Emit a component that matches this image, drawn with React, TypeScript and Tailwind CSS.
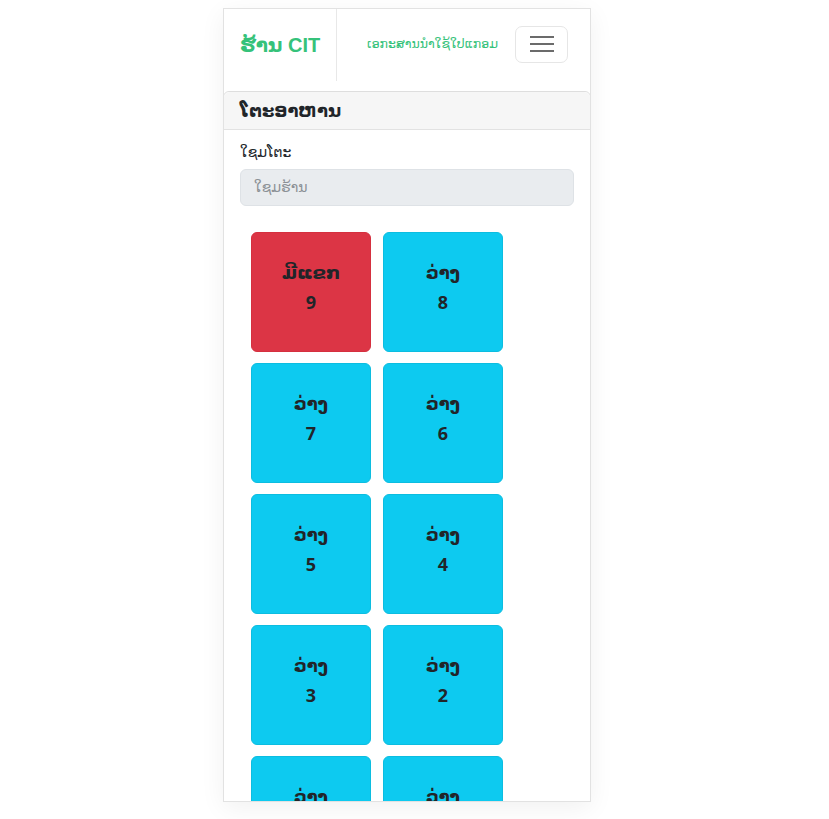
import React from "react";

const tables = [
  { label: "ມີແຂກ", n: 9, busy: true },
  { label: "ວ່າງ", n: 8 },
  { label: "ວ່າງ", n: 7 },
  { label: "ວ່າງ", n: 6 },
  { label: "ວ່າງ", n: 5 },
  { label: "ວ່າງ", n: 4 },
  { label: "ວ່າງ", n: 3 },
  { label: "ວ່າງ", n: 2 },
  { label: "ວ່າງ", n: 1 },
  { label: "ວ່າງ", n: 0 },
];

export default function App() {
  return (
    <div className="w-[829px] h-[819px] bg-white overflow-hidden pl-[223px] pt-[8px]">
      <div
        className="w-[368px] h-[794px] border border-[#e2e2e2] bg-white overflow-hidden flex flex-col shadow-[0_6px_24px_rgba(0,0,0,0.06)]"
        style={{ fontFamily: '"Noto Sans", "DejaVu Sans", sans-serif' }}
      >
        {/* navbar */}
        <div className="h-[82px] flex items-start shrink-0">
          <div className="w-[113px] h-[72px] border-r border-[#e8e8e8] flex items-center pl-[16px]">
            <span
              className="text-[20px] font-bold text-[#35c27a] leading-none"
              style={{ fontFamily: '"Liberation Sans", "DejaVu Sans", sans-serif' }}
            >
              ຮ້ານ CIT
            </span>
          </div>
          <div className="flex-1 h-[70px] flex items-center pl-[30px] pr-[22px] justify-between">
            <span className="text-[12.5px] text-[#35c27a] leading-none" style={{ fontFamily: '"DejaVu Sans", sans-serif' }}>
              ເອກະສານນຳໃຊ້ໃປແກອມ
            </span>
            <button className="w-[53px] h-[37px] border border-[#e6e6e6] rounded-[7px] flex flex-col items-center justify-center gap-[5px]">
              <span className="block w-[24px] h-[2px] bg-[#6b6b6b]" />
              <span className="block w-[24px] h-[2px] bg-[#6b6b6b]" />
              <span className="block w-[24px] h-[2px] bg-[#6b6b6b]" />
            </button>
          </div>
        </div>

        {/* card */}
        <div className="flex-1 border border-[#dedede] rounded-t-[6px] -mx-px">
          <div className="h-[38px] bg-[#f6f6f6] border-b border-[#e2e2e2] rounded-t-[6px] flex items-center pl-[16px]">
            <span className="text-[18px] font-semibold text-[#212529]">ໂຕະອາຫານ</span>
          </div>
          <div className="px-[16px] pt-[12px]">
            <div className="text-[14px] text-[#212529] leading-[20px]" style={{ fontFamily: '"DejaVu Sans", sans-serif' }}>
              ໃຊມໂຕະ
            </div>
            <div className="mt-[7px] h-[37px] bg-[#e9ecef] border border-[#dee2e6] rounded-[6px] flex items-center pl-[13px]">
              <span className="text-[14px] text-[#8c9196]" style={{ fontFamily: '"DejaVu Sans", sans-serif' }}>
                ໃຊມຮ້ານ
              </span>
            </div>
            <div className="mt-[26px] ml-[11px] grid grid-cols-[120px_120px] gap-x-[12px] gap-y-[11px]">
              {tables.map((t, i) => (
                <div
                  key={i}
                  className={
                    "w-[120px] h-[120px] rounded-[6px] flex flex-col items-center justify-center pb-[10px] text-[#212529] border " +
                    (t.busy ? "bg-[#dc3545] border-[#d5303f]" : "bg-[#0dcaf0] border-[#0cbde0]")
                  }
                >
                  <span className="text-[18px] font-semibold leading-[30px]">{t.label}</span>
                  <span className="text-[18px] font-bold leading-[30px]">{t.n}</span>
                </div>
              ))}
            </div>
          </div>
        </div>
      </div>
    </div>
  );
}
